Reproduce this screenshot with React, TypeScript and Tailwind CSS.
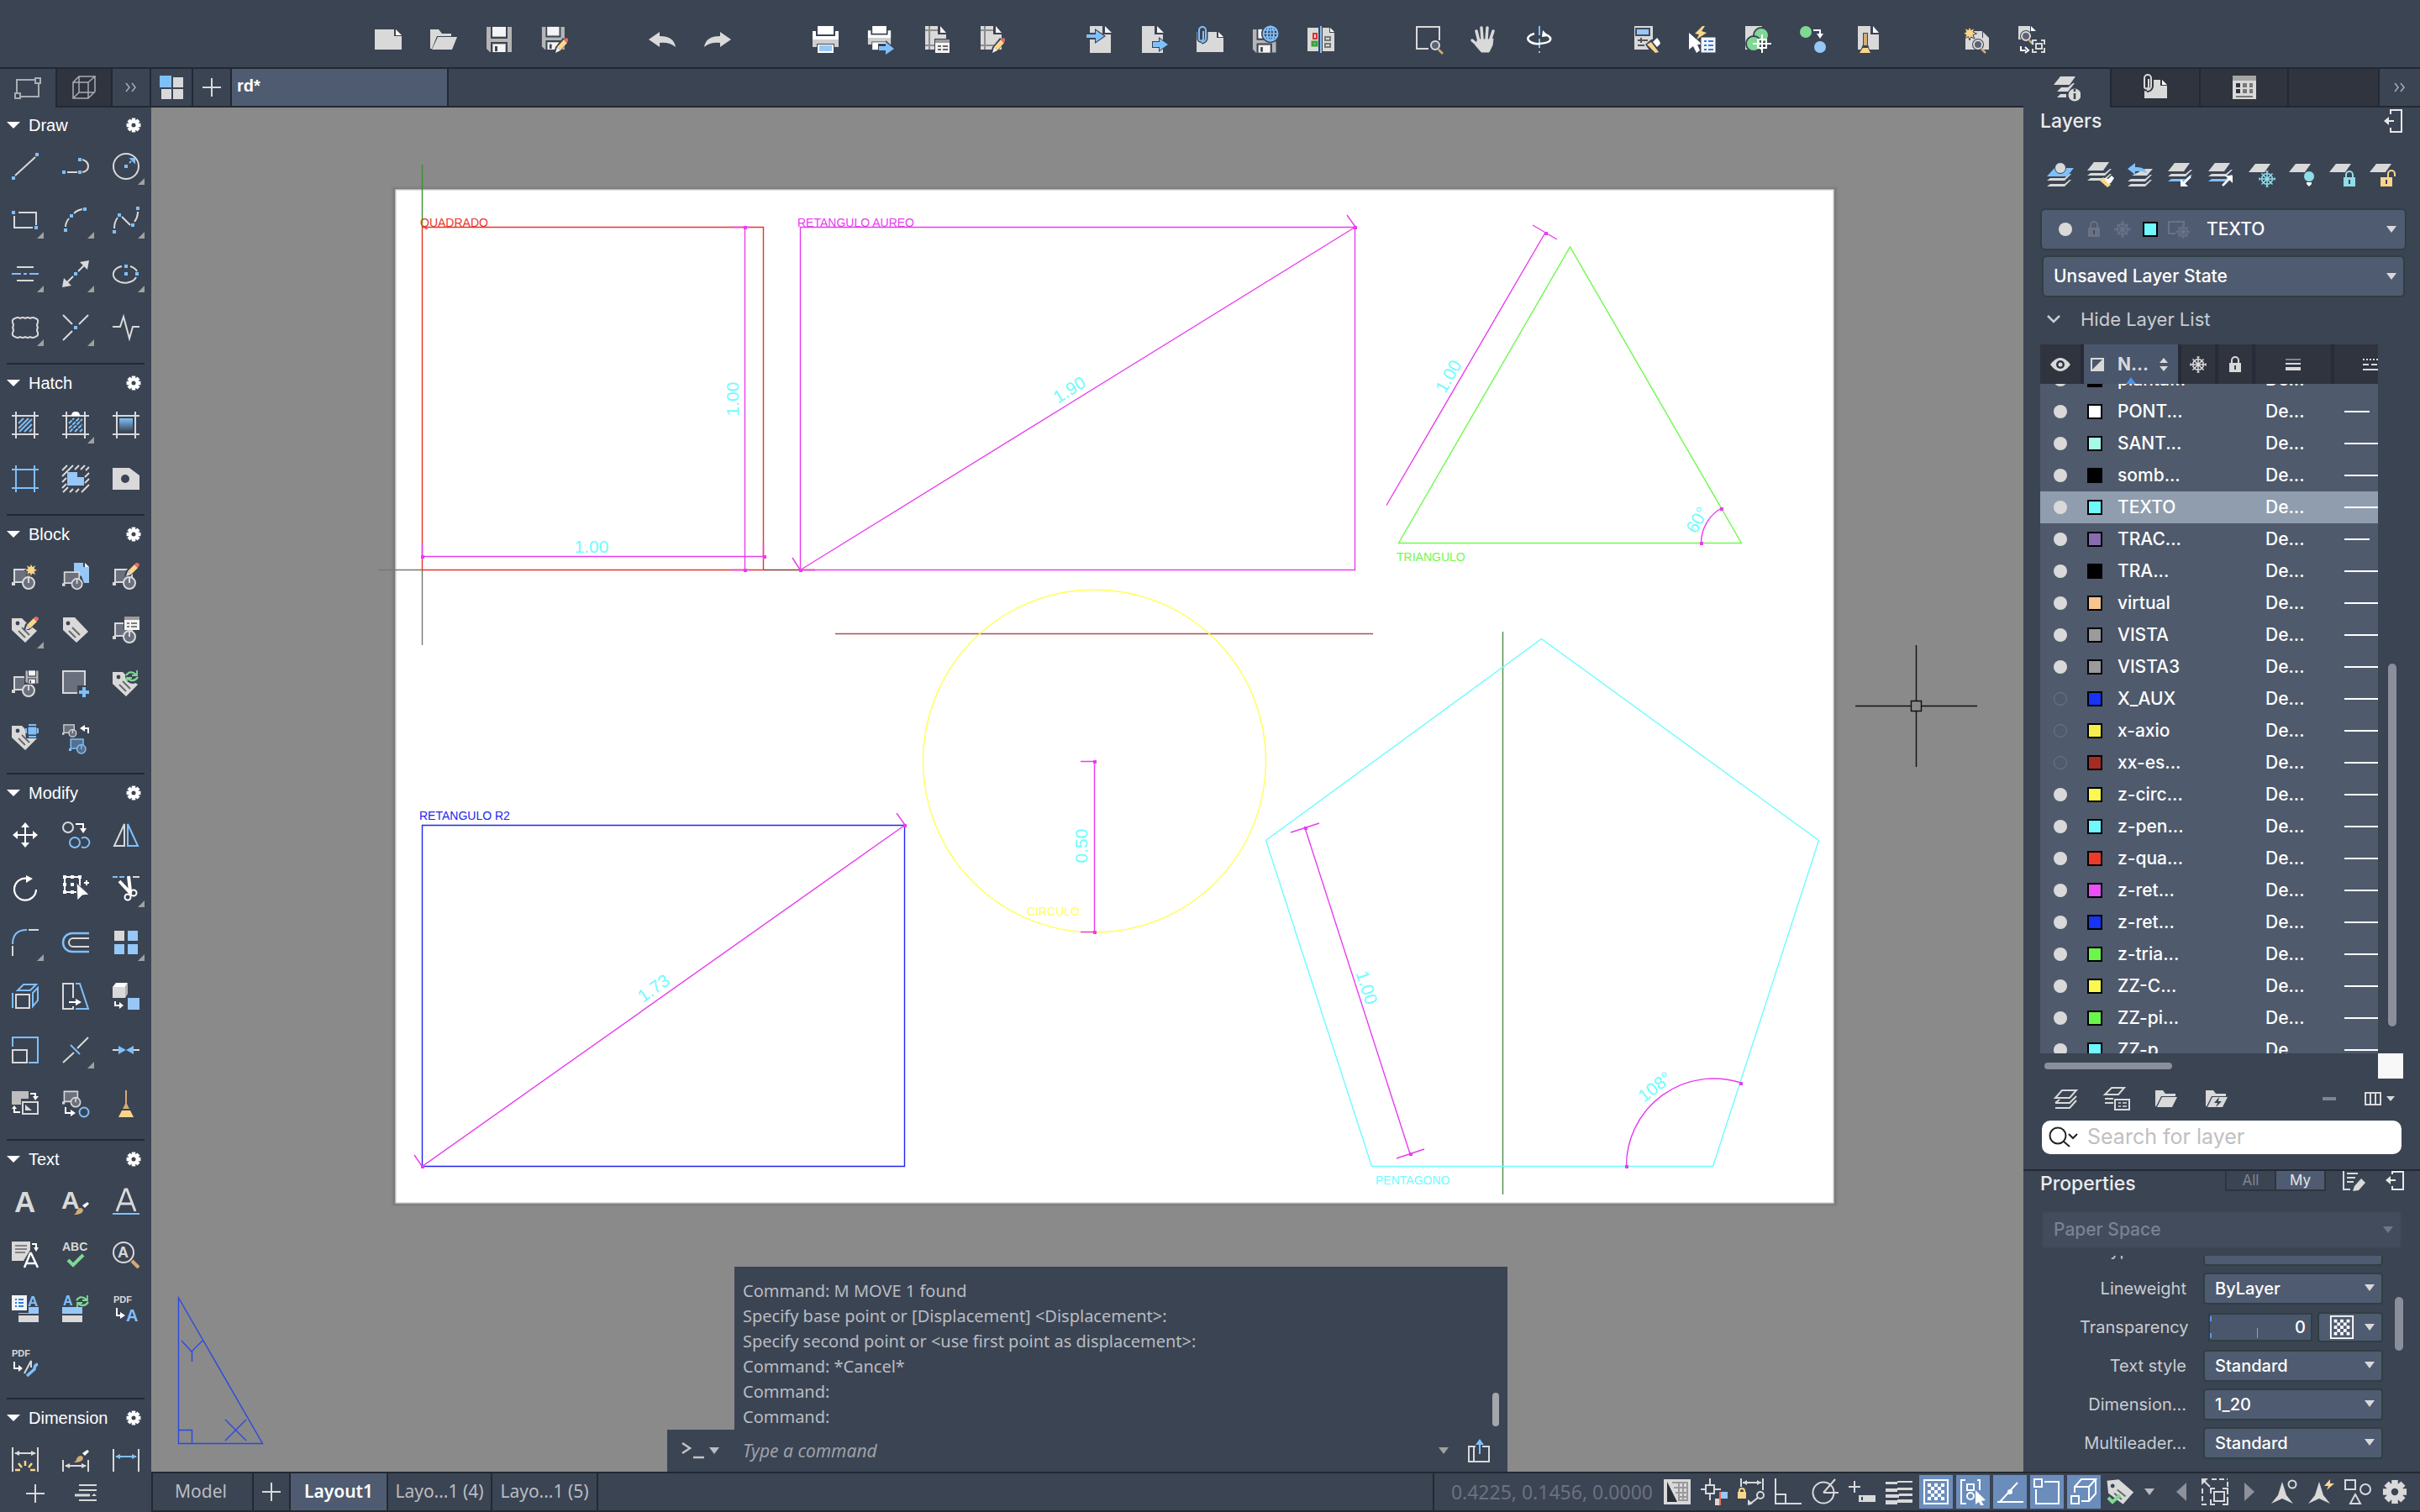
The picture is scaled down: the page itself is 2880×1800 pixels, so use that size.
import { useLayoutEffect, useRef, type ReactNode } from "react";

const G = "#d9d9d9";
const B = "#7fc0fb";
const LB = "#96c7f7";
const Y = "#fbd68a";
const GREEN = "#80d894";
const RED = "#ec6a68";
const TAN = "#d3ab76";
const PANEL = "#3b4453";

// ---------- shared icon pieces, all on a 32 x 32 grid ----------

const dot = (x: number, y: number) => <rect key={`${x}-${y}`} x={x - 2} y={y - 2} width="4" height="4" fill={B} stroke="none" />;

const Page = ({ fill = G }: { fill?: string }) => (
  <g stroke="none">
    <path d="M3 0h15v10h10v22H3z" fill={fill} />
    <path d="M21 0l8 8h-8z" fill="#f4f4f4" />
  </g>
);

const Pencil = () => (
  <g stroke="none">
    <path d="M15 32l2-7 9-11 6 5-9 11z" fill={PANEL} />
    <path d="M19 25l8-9 4 4-8 9z" fill={Y} />
    <path d="M27 16l3-2q3 1 2 4l-2 2z" fill={RED} />
    <path d="M19 25l4 4-6 3z" fill="#f2f2f2" />
  </g>
);

const PencilTop = () => (
  <g stroke="none">
    <path d="M14 16l2-7L26 0l6 2v4L21 16z" fill={PANEL} />
    <path d="M18 10l8-8 4 4-8 8z" fill={Y} />
    <path d="M26 2l2-2q4 0 4 3l-2 3z" fill={RED} />
    <path d="M18 10l4 4-6 2z" fill={G} />
  </g>
);

const Block = ({ c = G, fill = "#6b707e" }: { c?: string; fill?: string }) => (
  <g stroke={c}>
    <path d="M3 8h20v15H3z" fill={fill} />
    <path d="M0 23h4v4H0z" fill={c} stroke="none" />
    <circle cx="20" cy="24" r="7" fill={fill} />
    <path d="M20 24v-7" />
  </g>
);

const Tag = ({ full = false }: { full?: boolean }) => (
  <g stroke="none">
    <path d={full ? "M1 1h14l16 17-14 13L1 16z" : "M0 2h12l4 4 14 11-14 14L0 16z"} fill={G} />
    <circle cx="7" cy="8" r="2.4" fill={PANEL} />
    <path d="M8 17l8 8M12 13l9 9" stroke="#6a6a6a" strokeWidth="2" />
  </g>
);

const Disk = () => (
  <g stroke="none">
    <path d="M1 1h30v30H5l-4-4z" fill="#b5b5b5" />
    <path d="M7 1h17v11H7z" fill="#f4f4f4" />
    <path d="M6 0h2v13h16V0h2v15H6zM6 19h20v12h-2v-10H8v10H6z" fill={PANEL} />
    <path d="M9 22h14v9H9z" fill="#f4f4f4" />
    <path d="M11 24h3v6h-3z" fill={PANEL} />
  </g>
);

const Printer = () => (
  <g stroke="none">
    <path d="M7 0h19v10H7z" fill="#fff" />
    <path d="M1 6h4v6h23V6h4v10H1z" fill="#fff" />
    <path d="M1 16h31v9h-5v-4H6v4H1z" fill="#cfcfcf" />
    <path d="M7 22h19v10H7z" fill="#fff" />
  </g>
);

const Sheet = () => (
  <g stroke="none">
    <path d="M3 0h15v10h10v18H3z" fill={G} />
    <path d="M21 0l7 8h-7z" fill="#f4f4f4" />
    <path d="M3 5h15M3 23h22M8 0v28" stroke="#8d8d8d" />
  </g>
);

const Hatch = ({ c = G }: { c?: string }) => <path d="M0 5h32M0 27h32M5 0v32M27 0v32" stroke={c} strokeWidth="2" />;

const Plane = ({ y, c = G }: { y: number; c?: string }) => <path d={`M8 ${y}h18l-7 10H0z`} fill={c} stroke="none" />;

const Band = ({ y, c = G }: { y: number; c?: string }) => <path d={`M4 ${y}h17l6-5h2l-8 8H0z`} fill={c} stroke="none" />;

const Lens = ({ x, y, r = 5 }: { x: number; y: number; r?: number }) => (
  <g>
    <circle cx={x} cy={y} r={r + 2} fill={PANEL} stroke="none" />
    <circle cx={x} cy={y} r={r} fill="#5b6372" stroke={G} strokeWidth="2" />
    <path d={`M${x + r - 1} ${y + r}l5 5`} stroke={TAN} strokeWidth="2.5" />
  </g>
);

const Flake = ({ x, y, c, r = 8 }: { x: number; y: number; c: string; r?: number }) => (
  <g transform={`translate(${x} ${y}) scale(${r / 8})`} stroke={c} strokeWidth="1.6" fill="none">
    <path d="M-9 0H9M0-9V9M-6.5-6.500L6.500 6.500M-6.500 6.500L6.500-6.500" />
    <path d="M-2.500-6h5L6-2.500v5L2.500 6h-5L-6 2.500v-5z" />
    <path d="M-9-1.500v3M9-1.500v3M-1.500-9h3M-1.500 9h3" />
  </g>
);

const Lock = ({ x, y, c, open }: { x: number; y: number; c: string; open?: boolean }) => (
  <g transform={`translate(${x} ${y})`}>
    <path d={open ? "M9 9V4a4 4 0 0 1 8 0v3" : "M3 9V5a4 4 0 0 1 8 0v4"} stroke={c} strokeWidth="2" fill="none" />
    <path d="M0 8h14v11H0z" fill={c} stroke="none" />
    <path d="M7 11v5" stroke={PANEL} strokeWidth="2" />
  </g>
);

const Cycle = ({ x, y }: { x: number; y: number }) => (
  <g transform={`translate(${x} ${y})`} stroke={GREEN} strokeWidth="2.2" fill="none">
    <path d="M1 6q5-7 12-1M15 8q-5 7-12 2" />
    <path d="M14 0v6h-6M2 14V9h6" strokeWidth="1.8" />
  </g>
);

const Brush = ({ x, y }: { x: number; y: number }) => (
  <g transform={`translate(${x} ${y})`} stroke="none">
    <path d="M10 4l6-4 2 2-5 5z" fill="#fff" />
    <path d="M0 15q3-2 4-6 4-4 7 0 0 6-11 6z" fill={TAN} />
  </g>
);

const letter = (s: string, x: number, y: number, size: number, fill = G) => (
  <text x={x} y={y} fontSize={size} fill={fill} stroke="none" fontWeight="bold" fontFamily="Liberation Sans, sans-serif">
    {s}
  </text>
);

const clip = <path d="M8 6v9a2.5 2.5 0 0 1-5 0V5a4 4 0 0 1 8 0v10a5 5 0 0 1-5 4" fill="none" />;

const star = "M8 0l1.600 4.500L14 2.500l-2 4.500L16.500 9 12 10.500l2 4.500-4.500-2L8 17l-1.500-4.500L2 15l2-4.500L0 9l4-2L2 2.500l4.500 2z";

const icons: Record<string, ReactNode> = {
  // top bar
  new: <g stroke="none"><path d="M0 4h23v8h9v16H0z" fill={G} /><path d="M25 4l7 7h-7z" fill="#fff" /></g>,
  open: <g stroke="none"><path d="M0 4h10l4 5h11v3H8L2 27H0z" fill={G} /><path d="M9 13h23l-6 15H2z" fill={G} /></g>,
  save: <Disk />,
  saveAs: <g><g transform="scale(.9)"><Disk /></g><Pencil /></g>,
  undo: <path d="M0 16L13 7v5q17 0 19 13-7-6-19-5v5z" fill={G} stroke="none" />,
  redo: <path d="M32 16L19 7v5Q2 12 0 25q7-6 19-5v5z" fill={G} stroke="none" />,
  print: <g stroke="none"><Printer /><path d="M9 23h15v7H9z" fill={LB} /></g>,
  publish: <g stroke="none"><g transform="scale(.88)"><Printer /></g><path d="M13 21h9v-4l10 9-10 8v-5h-9z" fill={PANEL} /><path d="M14 24h8v-5l10 8-10 7v-5h-8z" fill={B} /></g>,
  pageSetup: <g stroke="none"><Sheet /><path d="M14 15h18v17H14z" fill={PANEL} /><path d="M15 20h17v12H15z" fill="#f4f4f4" /><path d="M15 16h17v4H15z" fill="#9b9b9b" /><path d="M18 24h4M24 24h6M18 28h4M24 28h6" stroke="#666" /></g>,
  plotStyle: <g><Sheet /><Pencil /></g>,
  import: <g transform="translate(2 0)"><Page /><path d="M0 8h9V3l13 9-13 9v-5H0z" fill={PANEL} stroke="none" /><path d="M-1 10h11V5l10 7-10 7v-5H-1z" fill={B} stroke="none" /></g>,
  export: <g><g transform="translate(-2 0)"><Page /></g><path d="M13 18h8v-5l12 9-12 9v-5h-8z" fill={PANEL} stroke="none" /><path d="M14 19h8v-4l10 7-10 7v-4h-8z" fill={B} stroke="none" /></g>,
  attach: <g stroke="none"><path d="M0 7h24v7h8v17H0z" fill={G} /><path d="M26 7l6 6h-6z" fill="#fff" /><g stroke={PANEL} strokeWidth="5">{clip}</g><g stroke={B} strokeWidth="2">{clip}</g></g>,
  reference: <g stroke="none"><path d="M3 7h19v7h8v15H3z" fill={G} /><path d="M24 7l6 6h-6z" fill="#fff" /><g stroke="#2f343f" strokeWidth="6">{clip}</g><g stroke={G} strokeWidth="2">{clip}</g></g>,
  saveWeb: <g stroke="none"><g transform="translate(0 3) scale(.92)"><Disk /></g><circle cx="22" cy="9" r="11" fill={PANEL} /><g stroke={B}><circle cx="22" cy="9" r="8.500" /><ellipse cx="22" cy="9" rx="4" ry="8.500" /><path d="M13 9h18M15 5h14M15 13h14M22 0v18" strokeWidth="1.500" /></g></g>,
  compare: <g stroke="none"><path d="M0 2h13v28H0zM18 2h8v6h6v22H18z" fill={G} /><path d="M27 2l5 5h-5z" fill="#fff" /><path d="M15 0h2v32h-2z" fill={B} /><path d="M7 9h4v6H7z" stroke="#e0302c" /><path d="M6 19h5v4H6z" stroke="#3aa33a" strokeWidth="3" /><path d="M21 13h6v4h-6zM21 21h6v4h-6z" stroke="#777" /></g>,
  zoomWin: <g><path d="M16 27H2V1h27v16" /><Lens x={24} y={23} r={5} /></g>,
  pan: <g stroke={G} strokeWidth="3.500" strokeLinecap="round"><path d="M10 18L7 6M14 16L13 2M19 16L20 2M23 18l4-12M10 24L2 17" /><path d="M9 16h15l3-1-1 8-4 8H13L6 23z" fill={G} strokeWidth="1" /></g>,
  orbit: <g><path d="M16 0v32" stroke={B} strokeDasharray="11 4" /><path d="M10 9Q0 12 3 17q5 5 13 4 15-1 13-7-2-3-6-4" stroke="#fff" strokeWidth="2.500" /><path d="M20 5l-1 8 8-1z" fill="#fff" stroke="none" /></g>,
  matchProp: <g stroke="none"><path d="M1 0h22v28H1z" fill={G} /><path d="M3 3h16v8H3z" fill={LB} stroke="#444c5a" /><path d="M5 17h12M5 23h8M9 14v6" stroke="#555" /><path d="M14 22l7-6 7-1 4 6-6 11-4 1z" fill={PANEL} /><path d="M16 22l5-3 9 12-4 1z" fill={Y} /><path d="M23 19l5-5 3 4 1 3-4 4z" fill="#fff" /></g>,
  quickSel: <g stroke="none"><path d="M0 8v20l5-4 4 8 4-3-3-7h6z" fill="#fff" /><path d="M16 0L7 9l5 1-3 6L21 8l-6-2 4-6z" fill={Y} /><path d="M14 13h18v19H14z" fill="#f4f4f4" stroke={PANEL} strokeWidth="1" /><path d="M18 18h3M23 18h6M18 23h3M23 23h6M18 28h3M23 28h6" stroke="#2f7de0" /></g>,
  group: <g stroke="none"><path d="M1 0h20v28H1z" fill={G} /><circle cx="20" cy="11" r="9" fill={GREEN} stroke={PANEL} /><circle cx="11" cy="21" r="9" fill={GREEN} stroke={PANEL} /><path d="M21 10v22M10 21h22M16 16h10v10H16z" stroke="#fff" strokeWidth="2" /></g>,
  replace: <g stroke="none"><circle cx="7" cy="7" r="7" fill={GREEN} /><circle cx="24" cy="25" r="7" fill={LB} /><path d="M16 5h8v6" stroke="#fff" /><path d="M20 9h8l-4 6z" fill="#fff" /></g>,
  purge: <g stroke="none"><path d="M3 0h15v10h10v18H3z" fill={G} /><path d="M21 0l7 8h-7z" fill="#fff" /><path d="M9 8h6v14l3 10H5l4-10z" fill={PANEL} /><path d="M10 9h4v14h-4z" fill={TAN} /><path d="M9 26h6l3 6H5z" fill={Y} /></g>,
  capture: <g stroke="none"><path d="M3 6h20v22H3z" fill={G} /><path d="M24 7l7 7h-7zM23 14h8v14h-8z" fill={G} /><g stroke={PANEL} strokeWidth="1"><path d={star} fill={Y} /></g><Lens x={18} y={22} /></g>,
  extract: <g stroke="none"><path d="M0 0h14v16H0z" fill={G} /><path d="M15 0l6 6h-6z" fill="#fff" /><Lens x={9} y={12} r={5} /><path d="M3 24v5h6M8 25l4 4-4 3" stroke="#fff" /><path d="M17 22v-5h5M27 17h4v5M31 26v5h-4M22 31h-5v-4" stroke={G} /><path d="M21 21h7v6h-7z" stroke={G} /></g>,
  // draw
  line: <g><path d="M4 27L28 5" />{dot(2, 30)}{dot(30, 2)}</g>,
  polyline: <g><path d="M6 23h12M24 8q7 2 7 8t-7 7" />{dot(2, 23)}{dot(21, 23)}{dot(21, 8)}</g>,
  circle: <g><circle cx="16" cy="16" r="15" /><path d="M20 12l5-5" stroke={B} strokeDasharray="3 1" /><path d="M22 7h4v4z" fill={B} stroke={B} />{dot(16, 16)}</g>,
  rect: <g><path d="M8 7h21v15M25 25H3V11" />{dot(2, 7)}{dot(29, 25)}</g>,
  arc: <g><path d="M4 24q0-5 4-10M14 8q4-4 10-5" />{dot(4, 28)}{dot(11, 11)}{dot(27, 3)}</g>,
  spline: <g><path d="M2 26q0-8 4-13M11 12l10 10M26 18q4-5 4-12" />{dot(2, 30)}{dot(8, 10)}{dot(24, 22)}{dot(30, 2)}</g>,
  mline: <g><path d="M6 8h20M6 24h20" /><path d="M0 16h11M14 16h4M21 16h11" stroke={B} /></g>,
  ray: <g><path d="M4 28l9-9M19 13l9-9" /><path d="M0 32l2-11 9 9zM32 0l-2 11-9-9z" fill={G} stroke="none" />{dot(16, 16)}</g>,
  ellipse: <g><path d="M11 7A14 10 0 1 0 28 20M21 7q6 2 8 6" />{dot(16, 7)}{dot(16, 16)}{dot(29, 16)}</g>,
  cloud: <path d="M4 5q3-2 6 0 3-2 6 0 3-2 6 0 3-2 6 0 4 1 3 5-2 3 0 6-2 3 0 6 1 4-3 5-3 2-6 0-3 2-6 0-3 2-6 0-3 2-6 0-4-1-3-5 2-3 0-6 2-3 0-6-1-4 3-5z" />,
  xline: <g><path d="M1 1l11 11M31 1L20 12M1 31l11-11" />{dot(16, 16)}</g>,
  breakline: <path d="M0 15h9l4-12 7 26 4-14h8" />,
  // hatch
  hatch: <g><Hatch /><path d="M8 14l6-6M8 20L20 8M9 24L24 9M15 24l9-9M21 24l3-3" stroke={B} /></g>,
  hatchEdit: <g><Hatch /><path d="M8 14l6-6M8 20L20 8M9 24L24 9M15 24l9-9M21 24l3-3" stroke={B} strokeDasharray="5 1" /><path d="M11 5q0-5 5-5t5 5z" fill="#fff" stroke="none" /></g>,
  gradient: <g><defs><linearGradient id="grad" x1="0" y1="0" x2="0" y2="1"><stop offset="0" stopColor={B} /><stop offset="1" stopColor={PANEL} /></linearGradient></defs><Hatch /><path d="M8 8h16v16H8z" fill="url(#grad)" stroke="none" /></g>,
  boundary: <Hatch c={B} />,
  region: <g><path d="M0 6l6-6M0 13L13 0M0 20l5-5M0 27l5-5M1 32l6-6M15 5l5-5M22 5l5-5M28 6l4-4M27 14l5-5M27 21l5-5M27 28l5-5M9 32l4-4M16 32l4-4M23 32l4-4" /><path d="M6 8h12v6h8v10H6z" fill={LB} stroke="none" /></g>,
  wipeout: <g stroke="none"><path d="M0 3h20l12 9v17H0z" fill={G} /><circle cx="15" cy="16" r="5" fill={PANEL} /></g>,
  // block
  blockNew: <g><Block /><g transform="translate(15 0)"><path d={star} fill={Y} stroke={PANEL} strokeWidth="1" /></g></g>,
  blockInsert: <g><path d="M14 0h11v5h7v19h-6l-3-8-9-4z" fill={LB} stroke="none" /><path d="M27 0l5 5h-5z" fill="#fff" stroke="none" /><g transform="translate(0 4) scale(.88)"><Block /></g></g>,
  blockEdit: <g><Block /><PencilTop /></g>,
  attrEdit: <g><Tag /><PencilTop /></g>,
  attrDef: <Tag full />,
  blockProp: <g><Block /><path d="M13 0h19v16H13z" fill={PANEL} stroke="none" /><path d="M14 0h18v4H14z" fill="#9b9b9b" stroke="none" /><path d="M14 4h18v12H14z" fill="#f4f4f4" stroke="none" /><path d="M17 8h3M22 8h7M17 12h3M22 12h7" stroke="#555" strokeWidth="1.600" /></g>,
  blockSave: <g><Block /><path d="M15 0h17v17H15z" fill={PANEL} stroke="none" /><g transform="translate(16 0) scale(.5)"><Disk /></g></g>,
  blockBase: <g><path d="M1 1h26v26H1z" fill="#6b707e" /><path d="M18 18h14v14H18z" fill={PANEL} stroke="none" /><path d="M26 20v12M20 26h12" stroke={B} strokeWidth="4" /></g>,
  attrSync: <g><Tag /><circle cx="24" cy="7" r="9" fill={PANEL} stroke="none" /><Cycle x={15} y={0} /></g>,
  attrExt: <g><Tag /><path d="M15 0h17v17H17z" fill={PANEL} stroke="none" /><path d="M20 4h9v8h-9z" fill={B} stroke={B} strokeWidth="1" /><path d="M20 1h9M20 15h9M17 5v6M31 5v6" stroke={B} /></g>,
  blockRep: <g><g transform="translate(0 -4) scale(.62)"><Block /></g><g transform="translate(8 12) scale(.74)"><Block c={B} fill="#55708f" /></g><path d="M31 11V5h-6" stroke="#fff" /><path d="M27 1v8l-6-4z" fill="#fff" stroke="none" /></g>,
  // modify
  move: <g stroke="#fff"><path d="M16 4v24M4 16h24" /><path d="M16 1l5 6H11zM16 31l5-6H11zM1 16l6-5v10zM31 16l-6-5v10z" fill="#fff" stroke="none" /></g>,
  copy: <g><circle cx="7" cy="7" r="6" /><circle cx="15" cy="25" r="6" stroke={B} /><path d="M23 20a6 6 0 1 1 0 10" stroke={B} /><path d="M16 3h9v6" stroke="#fff" /><path d="M21 8h8l-4 6z" fill="#fff" stroke="none" /></g>,
  mirror: <g><path d="M14 3v26H2z" /><path d="M18 3v26h12z" stroke={B} /></g>,
  rotate: <g stroke="#fff"><path d="M19 4A13 13 0 1 0 29 17" strokeWidth="2.200" /><path d="M17 0l8 4-8 5z" fill="#fff" stroke="none" /></g>,
  select: <g stroke="#fff"><path d="M3 2h18v18H3z" /><path d="M1 0h4v4H1zM10 0h4v4h-4zM19 0h4v4h-4zM1 9h4v4H1zM10 9h4v4h-4zM1 18h4v4H1zM10 18h4v4h-4z" fill="#fff" stroke="none" /><path d="M17 9l15 14-8 1-6 6z" fill="#fff" stroke={PANEL} strokeWidth="1" /><path d="M29 6v6M26 9h6" /></g>,
  trim: <g><path d="M0 2h16" stroke={B} strokeDasharray="6 2" /><path d="M24 2h8" /><path d="M8 7l14 15M19 1l2 18" stroke="#fff" strokeWidth="4" /><circle cx="18" cy="26" r="3.500" stroke="#fff" /><circle cx="25" cy="21" r="3.500" stroke="#fff" /></g>,
  fillet: <g><path d="M1 18Q1 1 18 1" stroke={B} /><path d="M20 1h12M1 20v12" /></g>,
  offset: <g><path d="M32 5H12a11 11 0 0 0 0 22h20" stroke={B} strokeWidth="2.500" /><path d="M32 11H13a5 5 0 0 0 0 10h19" /></g>,
  array: <g stroke="none"><path d="M2 2h12v12H2z" fill={G} /><path d="M18 2h12v12H18zM2 18h12v12H2zM18 18h12v12H18z" fill={LB} /></g>,
  solid: <g><path d="M5 14h16v16H5z" /><path d="M1 12v18M7 9l7-7h15l-7 7zM25 12l6-6v15l-6 7z" stroke={B} /></g>,
  stretch: <g><path d="M13 18V1H1v30h12v-3" /><path d="M16 1h5l10 30H16" stroke={B} /><path d="M8 23h9" stroke="#fff" /><path d="M16 19v8l7-4z" fill="#fff" stroke="none" /></g>,
  flat: <g stroke="none"><path d="M0 5h15v13H0z" fill={G} /><path d="M0 5l4-5h14l-3 5z" fill="#fff" /><path d="M15 5l3-5v13l-3 5z" fill="#b5b5b5" /><path d="M18 18h14v14H18z" fill={LB} /><path d="M3 22v5h6" stroke="#fff" /><path d="M8 23v8l5-4z" fill="#fff" /></g>,
  scale: <g><path d="M1 12V1h30v30H20" stroke={B} /><path d="M1 16h17v15H1z" /></g>,
  break: <g><path d="M1 31l13-12M18 14L31 1" /><path d="M10 10l11 11" stroke={B} /></g>,
  join: <g><path d="M0 16h8M24 16h8" /><path d="M7 11v10l9-5zM25 11v10l-9-5z" fill={B} stroke="none" /></g>,
  order: <g><path d="M0 1h20v9h-9v7H0z" fill="#bdbdbd" stroke="none" /><path d="M13 14h18v14H13z" /><path d="M16 17v7h8z" fill={G} stroke="none" /><path d="M22 4h6v4M10 26H3v-5" stroke="#fff" /><path d="M25 7h7l-4 5zM0 22h6l-3-4z" fill="#fff" stroke="none" /></g>,
  explode: <g><g transform="translate(0 -5) scale(.8)"><Block /></g><path d="M4 20v7h7" stroke="#fff" /><path d="M10 23v8l6-4z" fill="#fff" stroke="none" /><circle cx="26" cy="26" r="5.500" stroke={B} /></g>,
  broom: <g stroke="none"><path d="M15 0h2v16l3 6h-8l3-6z" fill={TAN} /><path d="M11 24h10l4 8H7z" fill={Y} /></g>,
  // text
  textA: letter("A", 3, 29, 35),
  textStyle: <g>{letter("A", -1, 25, 30)}<Brush x={14} y={17} /></g>,
  textLine: <g><path d="M5 28L15 2h2l10 26M9 19h14" strokeWidth="3" /><path d="M0 31h32" stroke={B} /></g>,
  textConv: <g><path d="M0 0h22v10l-8 13H0z" fill={G} stroke="none" /><path d="M4 5h14M4 9h14M4 13h12" stroke="#666" strokeWidth="1.500" /><path d="M24 3h5v5" stroke="#fff" /><path d="M26 7h6l-3 5z" fill="#fff" stroke="none" /><path d="M15 31l7-17h1l8 17M18 26h11" stroke="#fff" strokeWidth="2.500" /></g>,
  spell: <g>{letter("ABC", 0, 11, 14)}<path d="M7 22l6 6 12-12" stroke={GREEN} strokeWidth="4" /></g>,
  findText: <g><circle cx="13" cy="13" r="12" />{letter("A", 6, 19, 18)}<path d="M23 23l8 8" stroke={TAN} strokeWidth="4" /></g>,
  field: <g stroke="none"><path d="M0 0h18v18H0z" fill="#f4f4f4" /><path d="M4 5h2M8 5h6M4 9h2M8 9h6M4 13h2M8 13h6" stroke="#2f7de0" />{letter("A", 19, 13, 17, B)}<path d="M20 14h12v8H8v-1h12z" fill={LB} /><path d="M8 24h24v8H8z" fill={G} /></g>,
  fieldUp: <g stroke="none">{letter("A", 1, 12, 16, B)}<path d="M0 14h24v8H0z" fill={LB} /><path d="M0 24h24v8H0z" fill={G} /><Cycle x={16} y={0} /></g>,
  pdfText: <g>{letter("PDF", 1, 9, 11)}<path d="M5 15v9h6" stroke="#fff" /><path d="M9 20v8l6-4z" fill="#fff" stroke="none" />{letter("A", 16, 31, 20, B)}</g>,
  pdfSet: <g>{letter("PDF", 0, 9, 11)}<path d="M3 15v8h6" stroke="#fff" /><path d="M8 19v8l5-4z" fill="#fff" stroke="none" /><path d="M15 29l8-15v8" /><path d="M18 32l9-8q0-5 4-6" stroke={B} strokeWidth="3.500" /></g>,
  dim: <g><path d="M1 1v31M31 1v31M4 8h24" /><path d="M3 8l6-3v6zM29 8l-6-3v6z" fill={G} stroke="none" /><path d="M16 17v6M8 20l4 5M24 20l-4 5M4 28h6M28 28h-6" stroke={Y} strokeWidth="2.500" /></g>,
  dimStyle: <g><path d="M1 16v15M31 16v15M4 23h24" /><path d="M3 23l6-3v6zM29 23l-6-3v6z" fill={G} stroke="none" /><Brush x={14} y={4} /></g>,
  dimLin: <g><path d="M1 3v29M31 3v29" /><path d="M4 12h24" stroke={B} /><path d="M3 12l6-3v6zM29 12l-6-3v6z" fill={B} stroke="none" /></g>,
  // layers
  layMake: <g><Band y={27} /><Band y={20} /><path d="M0 18l9-10h23l-8 10z" fill={B} stroke="none" /><circle cx="16" cy="8" r="6.500" fill={G} stroke={PANEL} strokeWidth="1" /></g>,
  layMatch: <g><Plane y={1} /><Band y={14} /><Band y={20} /><path d="M15 23l4-4 9 9-4 3z" fill={Y} stroke="none" /><path d="M20 20l5 1 4-4 3 3-4 6-3 1z" fill="#fff" stroke="none" /></g>,
  layPrev: <g><Band y={27} /><Band y={21} /><path d="M5 17h18l7-8h-9" fill={G} stroke="none" /><path d="M0 9l9-7v5q11-1 14 7-7-3-14-2v4z" fill={B} stroke="none" /></g>,
  layIso: <g><Plane y={2} /><Band y={15} /><Band y={21} c={B} /><path d="M27 18L17 28" stroke="#fff" strokeWidth="2.500" /><path d="M15 30v-9l9 9z" fill="#fff" stroke="none" /></g>,
  layUniso: <g><Plane y={2} /><Band y={15} /><Band y={21} c={B} /><path d="M17 29l10-10" stroke="#fff" strokeWidth="2.500" /><path d="M29 17v9l-9-9z" fill="#fff" stroke="none" /></g>,
  layFreeze: <g><Plane y={3} /><Flake x={22} y={21} c="#8fdde6" /></g>,
  layOff: <g><Plane y={3} /><circle cx="24" cy="18" r="6.500" fill="#8fdde6" stroke={PANEL} strokeWidth="1" /><path d="M21 25h6v2l-3 3-3-3z" fill="#fff" stroke="none" /></g>,
  layLock: <g><Plane y={3} /><Lock x={17} y={11} c="#8fdde6" /></g>,
  layUnlock: <g><Plane y={3} /><Lock x={13} y={11} c={Y} open /></g>,
  addLayer: <path d="M12 6h17l-8 9H4zM29 13l-8 8H4M29 18l-8 9H4M4 21l5-4" />,
  layState: <g><path d="M11 3h15l-7 8H3zM3 16h10M3 21h10" /><path d="M15 17h17v12H15z" fill={PANEL} /><path d="M19 21h3M24 21h5M19 25h3M24 25h5" strokeWidth="1.500" /></g>,
  group1: <g stroke="none"><path d="M3 6h9l3 4h12v3H10L4 25H3z" fill={G} /><path d="M11 14h18l-6 12H5z" fill={G} /></g>,
  group2: <g stroke="none"><path d="M3 6h9l3 4h12v3H10L4 25H3z" fill={G} /><path d="M11 14h18l-6 12H5z" fill={G} /><path d="M19 14l-6 7h4l-2 5 7-7h-4z" fill={PANEL} /></g>,
  // status bar
  modelPaper: <g stroke="none"><path d="M0 1h32v30H0z" fill={G} /><path d="M4 4l12 24H4z" fill="#2b2f38" /><path d="M10 5h18v21H17" fill="none" stroke="#9a9a9a" /><path d="M12 11h16M14 17h14M17 22h11M18 5v20M23 5v21" stroke="#9a9a9a" /></g>,
  snapCross: <g><path d="M11 0v8M11 17v9M0 13h7M15 13h9" /><path d="M6 8h10v10H6z" /><path d="M24 16h8v8h-8z" fill={LB} stroke="none" /><path d="M17 24h5v8h-5z" fill={G} stroke="none" /><path d="M23 16v16" stroke="#f06a5d" /></g>,
  infer: <g><path d="M4 0v10M30 0v14M6 5h22" /><path d="M6 5l5-3v6zM28 5l-5-3v6z" fill={G} stroke="none" /><path d="M2 17v-2a3 3 0 0 1 6 0v2" stroke={Y} /><path d="M0 16h10v8H0z" fill={Y} stroke="none" /><circle cx="27" cy="20" r="4" /><path d="M24 23l-10 8" /><path d="M12 32v-7l6 5z" fill={G} stroke="none" /></g>,
  ortho: <path d="M1 0v30h31M1 19h12v11" />,
  polar: <g><circle cx="14" cy="17" r="12.500" /><path d="M14 17L28 1M14 17h18" /></g>,
  dynInput: <g><path d="M7 3v14M0 10h14" /><path d="M12 20h20v8H12z" fill={G} stroke="none" /><path d="M16 22v4" stroke={PANEL} /></g>,
  lineweight: <g stroke="none" fill={G}><path d="M0 4h14V3h18v2H14v2H0zM0 12h14v-1h18v3H14v2H0zM0 19h16v-1h16v3H16v2H0zM0 26h14v-1h18v4H14v2H0z" /></g>,
  transp: (
    <g stroke="#fff">
      <path d="M2 2h28v28H2z" />
      <path d="M6 8h20M6 16h20M6 24h20" strokeWidth="4" strokeDasharray="4 4" />
      <path d="M10 12h12M10 20h12" strokeWidth="4" strokeDasharray="4 4" />
    </g>
  ),
  cycleSel: <g stroke="#fff"><path d="M7 2H2v28h6M21 2h3v12M9 7h8v7H9z" /><circle cx="13" cy="21" r="4" /><path d="M19 14l12 12-5 1 3 5h-4l-2-4-4 3z" fill="#fff" stroke="none" /></g>,
  osnap: <g stroke="#fff"><path d="M4 28L25 5M1 28h31" /><circle cx="16" cy="16" r="2" fill="#fff" /></g>,
  snap2d: <g stroke="#fff"><path d="M13 4h17v26H3V13" /><path d="M1 1h9v9H1z" /></g>,
  snap3d: <g stroke="#fff"><path d="M5 17V10h17v17H13M5 10l8-9h17l-8 9M30 1v17l-8 9" /><path d="M1 21h9v9H1z" /></g>,
  annoTag: <g><g transform="rotate(-6 16 16)"><Tag full /></g><path d="M1 23l5 5 9-8" stroke={GREEN} strokeWidth="4" /></g>,
  prev: <path d="M21 5v22L9 16z" fill="#8c919c" stroke="none" />,
  next: <path d="M11 5v22l12-11z" fill="#8c919c" stroke="none" />,
  viewport: <g><path d="M12 1h19M31 4v27M1 12v19h8M11 31h4" strokeDasharray="6 3" /><path d="M3 3l7 7" /><path d="M0 0h8L0 8z" fill={G} stroke="none" /><path d="M11 18v-6h5M25 12h6v6M31 25v6h-6M16 31h-5v-6" /><path d="M15 16h12v11H15z" /></g>,
  annoVis: <g><path d="M14 4l5 16 8 10-13-6-13 6 8-10z" fill={G} stroke="none" /><circle cx="26" cy="7" r="4.500" /></g>,
  annoAuto: <g><path d="M14 4l5 16 8 10-13-6-13 6 8-10z" fill={G} stroke="none" /><path d="M27 1l-7 8h5l-2 5 9-8h-5z" fill={Y} stroke="none" /></g>,
  isolate: <g><path d="M1 2h12v11H1z" /><circle cx="25" cy="13" r="6" /><path d="M13 19l6 11H7z" /></g>,
};

function Icon({ name, className = "size-8" }: { name: string; className?: string }) {
  return (
    <svg viewBox="0 0 32 32" fill="none" stroke={G} strokeWidth="2" className={`shrink-0 overflow-visible ${className}`} aria-hidden="true">
      {icons[name]}
    </svg>
  );
}

function Gear({ className }: { className: string }) {
  return (
    <svg viewBox="-16 -16 32 32" className={`shrink-0 ${className}`} aria-hidden="true">
      {[0, 45, 90, 135].map((a) => (
        <rect key={a} x="-4" y="-15" width="8" height="30" fill="currentColor" transform={`rotate(${a})`} />
      ))}
      <circle r="11" fill="currentColor" />
      <circle r="4.5" fill={PANEL} />
    </svg>
  );
}

function Caret({ className = "", size = "h-2 w-3" }: { className?: string; size?: string }) {
  return (
    <svg viewBox="0 0 12 8" preserveAspectRatio="none" className={`pointer-events-none shrink-0 ${size} ${className}`} aria-hidden="true">
      <path d="M0 0h12L6 8z" fill="currentColor" />
    </svg>
  );
}

function Plus({ className = "size-[22px]" }: { className?: string }) {
  return (
    <svg viewBox="0 0 22 22" className={className} stroke={G} strokeWidth="2" aria-hidden="true">
      <path d="M11 0v22M0 11h22" />
    </svg>
  );
}

function Chevrons() {
  return (
    <svg viewBox="0 0 14 12" className="h-3 w-3.5" fill="none" stroke="#a9adb5" strokeWidth="1.5" aria-hidden="true">
      <path d="M1 1l4 5-4 5M8 1l4 5-4 5" />
    </svg>
  );
}

const toolbar = [
  ["new", "open", "save", "saveAs"],
  ["undo", "redo"],
  ["print", "publish", "pageSetup", "plotStyle"],
  ["import", "export", "attach", "saveWeb", "compare"],
  ["zoomWin", "pan", "orbit"],
  ["matchProp", "quickSel", "group", "replace", "purge"],
  ["capture", "extract"],
];

// a trailing "+" marks tools that carry a flyout
const toolSets = [
  { title: "Draw", tools: ["line", "polyline", "circle+", "rect+", "arc+", "spline+", "mline+", "ray+", "ellipse+", "cloud+", "xline+", "breakline"] },
  { title: "Hatch", tools: ["hatch", "hatchEdit+", "gradient", "boundary", "region", "wipeout"] },
  { title: "Block", tools: ["blockNew", "blockInsert", "blockEdit", "attrEdit+", "attrDef", "blockProp", "blockSave", "blockBase", "attrSync", "attrExt", "blockRep"] },
  {
    title: "Modify",
    tools: ["move", "copy", "mirror", "rotate", "select", "trim+", "fillet+", "offset", "array+", "solid", "stretch", "flat", "scale", "break+", "join", "order", "explode", "broom"],
  },
  { title: "Text", tools: ["textA", "textStyle", "textLine", "textConv", "spell", "findText", "field", "fieldUp", "pdfText", "pdfSet"] },
  { title: "Dimension", tools: ["dim", "dimStyle", "dimLin"] },
];

const layers: { name: string; color: string; off?: boolean; short?: boolean }[] = [
  { name: "planta...", color: "#000000" },
  { name: "PONT...", color: "#ffffff", short: true },
  { name: "SANT...", color: "#a5fbe6" },
  { name: "somb...", color: "#000000" },
  { name: "TEXTO", color: "#6ff9ff" },
  { name: "TRAC...", color: "#8a6bb1", short: true },
  { name: "TRA...", color: "#000000" },
  { name: "virtual", color: "#f6c58d" },
  { name: "VISTA", color: "#9b9b9b" },
  { name: "VISTA3", color: "#9b9b9b" },
  { name: "X_AUX", color: "#1733f5", off: true },
  { name: "x-axio", color: "#f7ee4b", off: true },
  { name: "xx-es...", color: "#a42c22", off: true },
  { name: "z-circ...", color: "#fbf94f" },
  { name: "z-pen...", color: "#6ff9ff" },
  { name: "z-qua...", color: "#ea3a2b" },
  { name: "z-ret...", color: "#e94ff5" },
  { name: "z-ret...", color: "#1733f5" },
  { name: "z-tria...", color: "#6cf64c" },
  { name: "ZZ-C...", color: "#fbf94f" },
  { name: "ZZ-pi...", color: "#6cf64c" },
  { name: "ZZ-p...", color: "#6ff9ff" },
];

function useScrolled<T extends HTMLElement>(top: number) {
  const ref = useRef<T>(null);
  useLayoutEffect(() => {
    if (ref.current) ref.current.scrollTop = top;
  }, [top]);
  return ref;
}

function TopBar() {
  return (
    <header className="flex h-[82px] shrink-0 items-center justify-center gap-[62px] border-b-2 border-[#222933] pt-3.5">
      {toolbar.map((group) => (
        <div key={group[0]} className="flex">
          {group.map((name) => (
            <button key={name} aria-label={name} className="flex h-12 w-[66px] items-center justify-center">
              <Icon name={name} />
            </button>
          ))}
        </div>
      ))}
    </header>
  );
}

function ToolPalette() {
  return (
    <aside className="flex w-[180px] shrink-0 flex-col">
      <div className="flex h-[46px] shrink-0">
        <button aria-label="2D tools" className="flex w-[66px] items-center justify-center">
          <svg viewBox="0 0 32 26" className="h-[26px] w-8" fill="none" stroke="#a9adb5" strokeWidth="2">
            <path d="M25 3H3v16M7 23h22V7M25 1h6v6h-6zM1 19h6v6H1z" />
          </svg>
        </button>
        <button aria-label="3D tools" className="flex w-[68px] items-center justify-center border-x-2 border-b-2 border-[#222933] bg-[#2f343f]">
          <svg viewBox="0 0 28 28" className="size-7" fill="none" stroke="#a9adb5" strokeWidth="1.5">
            <path d="M1 8h18v19H1zM1 8l7-7h19l-8 7M27 1v18l-8 8M8 1v19h18M8 20l-7 7" />
          </svg>
        </button>
        <button aria-label="More tool sets" className="flex flex-1 items-center justify-center border-r-2 border-b-2 border-[#222933]">
          <Chevrons />
        </button>
      </div>
      <div className="min-h-0 flex-1 overflow-hidden">
        {toolSets.map(({ title, tools }, i) => (
          <section key={title}>
            {i > 0 && <hr className="mx-2 border-t-2 border-[#222933]" />}
            <h2 className={`flex items-center pt-1 pr-3 pl-2 text-xl text-white ${i > 0 ? "h-10" : "h-[38px]"}`}>
              <Caret size="h-2 w-4" className="mr-2.5" />
              <span className="flex-1">{title}</span>
              <Gear className="size-[18px]" />
            </h2>
            <div className="grid grid-cols-3 pb-2.5">
              {tools.map((tool) => (
                <button key={tool} aria-label={tool.replace("+", "")} className="relative flex h-16 items-center justify-center">
                  <Icon name={tool.replace("+", "")} />
                  {tool.endsWith("+") && (
                    <svg viewBox="0 0 8 8" className="absolute right-2 bottom-2.5 size-2" aria-hidden="true">
                      <path d="M8 0v8H0z" fill="#a0a0a0" />
                    </svg>
                  )}
                </button>
              ))}
            </div>
          </section>
        ))}
      </div>
      <div className="flex h-12 shrink-0 items-center gap-9 pt-1 pl-[31px]">
        <button aria-label="Add palette">
          <Plus />
        </button>
        <button aria-label="Palette menu">
          <svg viewBox="0 0 26 22" className="h-[22px] w-[26px]" fill="none" stroke={G} strokeWidth="2">
            <path d="M5 1h21M5 7h21M5 19h21" />
            <path d="M0 13h18" strokeWidth="3" />
            <path d="M20 14l3-3 3 3z" fill={G} stroke="none" />
          </svg>
        </button>
      </div>
    </aside>
  );
}

const MAG = "#e93cf0";
const CYAN = "#6efcff";

function Dim({ x, y, angle = 0, children }: { x: number; y: number; angle?: number; children: string }) {
  return (
    <text transform={`translate(${x} ${y}) rotate(${angle})`} y="-7" textAnchor="middle" fontSize="21" fill={CYAN}>
      {children}
    </text>
  );
}

function Drawing() {
  return (
    <svg viewBox="180 128 2228 1624" className="absolute inset-0 size-full" fill="none" strokeWidth="1.4" fontFamily="Liberation Sans, Arial, sans-serif">
      <rect x="466" y="222" width="1721" height="1214" fill="#838383" />
      <rect x="468" y="224" width="1717" height="1210" fill="#7a7a7a" />
      <rect x="471" y="226" width="1711" height="1206" fill="#fff" stroke="#d4d4d4" />

      {/* axes */}
      <path d="M502.500 196v74" stroke="#3f8f35" />
      <path d="M502.500 678v90M450 678.500h52" stroke="#777777" />
      <path d="M909 678.500h61" stroke="#8a3b3b" />
      <path d="M994 754.500h640" stroke="#a84f4f" />
      <path d="M1788.500 752v670" stroke="#4f8f4a" />

      {/* square */}
      <path d="M502.500 270.500h406v408h-406z" stroke="#e8352b" />
      <path d="M886.500 270v408M870 270.500h23M870 678.500h23M502.500 646v20M908.500 646v20M501 662.500h409" stroke={MAG} />
      <text x="500" y="270" fontSize="14" fill="#e8352b">QUADRADO</text>
      <Dim x={704} y={665}>1.00</Dim>
      <Dim x={886} y={475} angle={-90}>1.00</Dim>

      {/* golden rectangle */}
      <path d="M952.500 270.500h660v408h-660zM952.500 678.500l660-408M1603 256l10 14M943 664l9 14" stroke={MAG} />
      <text x="949" y="270" fontSize="14" fill={MAG}>RETANGULO AUREO</text>
      <Dim x={1280} y={476} angle={-31.7}>1.90</Dim>

      {/* triangle */}
      <path d="M1664.500 646.500l204-352.500 204 352.500z" stroke="#6ff84e" />
      <path d="M1839 277l-189 324.500M1824 268l29 17M2024.500 646.500a48 48 0 0 1 24-41.500" stroke={MAG} />
      <text x="1662" y="668" fontSize="14" fill="#6ff84e">TRIANGULO</text>
      <Dim x={1736} y={455} angle={-60}>1.00</Dim>
      <Dim x={2032} y={626} angle={-60}>60°</Dim>

      {/* circle */}
      <circle cx="1302.5" cy="906" r="204" stroke="#ffff5a" />
      <path d="M1302.500 906v203M1286 906.500h16M1286 1109.500h16" stroke={MAG} />
      <text x="1222" y="1090" fontSize="14" fill="#ffff5a">CIRCULO</text>
      <Dim x={1301} y={1007} angle={-90}>0.50</Dim>

      {/* root-two rectangle */}
      <path d="M502.500 982.500h574v406h-574z" stroke="#2026ee" />
      <path d="M502.500 1388.500l574-406M1067 968l10 14M493 1375l9 13" stroke={MAG} />
      <text x="499" y="976" fontSize="14" fill="#2026ee">RETANGULO R2</text>
      <Dim x={786} y={1188} angle={-35.3}>1.73</Dim>

      {/* pentagon */}
      <path d="M1834.500 760.500l330 240-126 388h-406l-126-388z" stroke={CYAN} />
      <path d="M1553 985.500l125 388M1536 991l34-11M1662 1379l33-11M1935.500 1388a104 104 0 0 1 136-99" stroke={MAG} />
      <text x="1637" y="1410" fontSize="14" fill={CYAN}>PENTAGONO</text>
      <Dim x={1613} y={1180} angle={72}>1.00</Dim>
      <Dim x={1978} y={1305} angle={-38}>108°</Dim>

      <g fill={MAG}>
        {[[502, 662], [909, 662], [886, 270], [886, 678], [1612, 270], [952, 678], [1839, 277], [2024, 646], [2048, 605], [1302, 906], [1302, 1109], [1076, 982], [502, 1388], [1553, 985], [1678, 1373], [1935, 1388], [2071, 1289]].map(([x, y]) => (
          <rect key={`${x}-${y}`} x={x - 1} y={y - 1} width="4" height="4" />
        ))}
      </g>

      {/* UCS icon */}
      <path d="M212.500 1545v173.500h100zM212.500 1702.500h16v16M216 1596l12 13 13-13M228.500 1608v13M268 1690l25 25M293 1690l-25 25" stroke="#2b49e0" />

      {/* cursor */}
      <path d="M2208 840.500h66M2287 840.500h66M2280.500 768v66M2280.500 847v66M2274.500 834.500h12v12h-12z" stroke="#111" />
    </svg>
  );
}

function CommandLine() {
  return (
    <div className="absolute bottom-0 left-1/2 flex w-[1000px] -translate-x-1/2 flex-col items-end font-['Noto_Sans',sans-serif] text-[#b9bcc2]">
      <div className="relative w-[920px] bg-[#3b4453] pt-3.5 pl-2.5 text-[20px] leading-[30px]">
        <p>Command: M MOVE 1 found</p>
        <p>Specify base point or [Displacement] &lt;Displacement&gt;:</p>
        <p>Specify second point or &lt;use first point as displacement&gt;:</p>
        <p>Command: *Cancel*</p>
        <p>Command:</p>
        <p>Command:</p>
        <div className="absolute right-2.5 bottom-1 h-10 w-2 rounded bg-[#a3a6ab]" />
      </div>
      <div className="flex h-[50px] w-full items-center bg-[#3b4453]">
        <button aria-label="Recent commands" className="flex w-20 items-center gap-1 pl-4">
          <svg viewBox="0 0 30 20" className="h-5 w-[30px]" fill="none" stroke="#c4c4c4" strokeWidth="2.5" aria-hidden="true">
            <path d="M2 1l9 6-9 6M15 18h13" />
          </svg>
          <Caret />
        </button>
        <input aria-label="Command" placeholder="Type a command" className="h-full flex-1 bg-transparent pl-2.5 text-[21px] italic outline-none placeholder:text-[#9da1a9]" />
        <Caret className="mr-[22px] text-[#a0a0a0]" />
        <button aria-label="Detach" className="mr-5">
          <svg viewBox="0 0 28 28" className="size-7" fill="none" stroke={G} strokeWidth="2">
            <path d="M10 9H2v18h24V9h-8M8 9v18" />
            <path d="M15 18V5" stroke={B} />
            <path d="M15 0l5 7H10z" fill={B} stroke="none" />
          </svg>
        </button>
      </div>
    </div>
  );
}

function Viewport() {
  return (
    <main className="flex min-w-0 flex-1 flex-col">
      <div className="flex h-[46px] shrink-0 border-b-2 border-[#222933]">
        <button aria-label="Start" className="flex w-[50px] items-center justify-center border-r-2 border-[#222933]">
          <svg viewBox="0 0 28 28" className="size-7" aria-hidden="true">
            <path d="M0 0h14v14H0z" fill={B} />
            <path d="M16 2h12v12H16zM2 16h12v12H2zM16 16h12v12H16z" fill={G} />
          </svg>
        </button>
        <button aria-label="New drawing" className="flex w-[46px] items-center justify-center border-r-2 border-[#222933]">
          <Plus />
        </button>
        <button className="w-[258px] border-r-2 border-[#222933] bg-[#4f5b70] pb-1 pl-1.5 text-left text-xl font-bold text-white">rd*</button>
      </div>
      <div className="relative min-h-0 flex-1 overflow-hidden bg-[#8a8a8a]">
        <Drawing />
        <CommandLine />
      </div>
    </main>
  );
}

function DetachIcon() {
  return (
    <svg viewBox="0 0 24 28" className="h-7 w-6 shrink-0" fill="none" stroke="#e8e8e8" strokeWidth="2" aria-hidden="true">
      <path d="M9 6V1h13v26H9v-5M3 14h10" />
      <path d="M1 14l6-5v10z" fill="#e8e8e8" stroke="none" />
    </svg>
  );
}

function PropSelect({ id, value }: { id: string; value: string }) {
  return (
    <div className="relative h-[38px] w-[214px]">
      <select id={id} className="size-full appearance-none rounded border-2 border-[#2f3f42] bg-[#4f5b70] pl-3 font-medium text-white">
        <option>{value}</option>
      </select>
      <Caret className="absolute top-3.5 right-2.5 text-[#d9d9d9]" />
    </div>
  );
}

const th = "sticky top-0 z-10 h-[47px] border-r-4 border-[#262c38] p-0";

function LayerTable() {
  const ref = useScrolled<HTMLDivElement>(24);
  return (
    <div className="flex min-h-0 flex-1">
      <div ref={ref} className="w-[402px] overflow-hidden bg-[#4f5a6c]">
        <table className="w-[402px] table-fixed border-separate border-spacing-0 text-left">
          <colgroup>
            <col className="w-[52px]" />
            <col className="w-[116px]" />
            <col className="w-11" />
            <col className="w-11" />
            <col className="w-[94px]" />
            <col className="w-[52px]" />
          </colgroup>
          <thead>
            <tr>
              <th aria-label="On" className={`${th} bg-[#2f343f]`}>
                <svg viewBox="0 0 24 16" className="mx-auto h-4 w-6"><path d="M0 8q12-16 24 0-12 16-24 0z" fill={G} /><circle cx="12" cy="8" r="5" fill="#2f343f" /><circle cx="12" cy="8" r="2.500" fill={G} /></svg>
              </th>
              <th className={`${th} bg-[#4a566b]`}>
                <span className="flex items-center pl-2 font-bold text-[#d9d9d9]">
                  <svg viewBox="0 0 16 16" className="mr-4 size-4"><path d="M1 1h14v14H1z" fill="none" stroke={G} strokeWidth="2" /><path d="M15 1v14H1z" fill={G} /></svg>
                  <span className="flex-1">N...</span>
                  <svg viewBox="0 0 10 16" className="mr-3 h-4 w-2.5"><path d="M5 0l5 6H0zM5 16l5-6H0z" fill={G} /></svg>
                </span>
                <svg viewBox="0 0 12 8" className="absolute bottom-0 left-[50px] h-2 w-3"><path d="M0 8l6-8 6 8z" fill="#4b93e8" /></svg>
              </th>
              <th aria-label="Freeze" className={`${th} bg-[#2f343f]`}>
                <svg viewBox="0 0 20 20" className="mx-auto size-5"><Flake x={10} y={10} c={G} /></svg>
              </th>
              <th aria-label="Lock" className={`${th} bg-[#2f343f]`}>
                <svg viewBox="-1 0 16 20" className="mx-auto h-5 w-4" fill="none"><Lock x={0} y={0} c={G} /></svg>
              </th>
              <th aria-label="Lineweight" className={`${th} bg-[#2f343f]`}>
                <svg viewBox="0 0 18 14" className="mx-auto h-3.5 w-[18px]" stroke={G}><path d="M0 1h18" strokeWidth="1" /><path d="M0 6h18" strokeWidth="2" /><path d="M0 12h18" strokeWidth="4" /></svg>
              </th>
              <th aria-label="Linetype" className="sticky top-0 z-10 h-[47px] bg-[#2f343f] p-0">
                <svg viewBox="0 0 18 14" className="ml-auto h-3.5 w-[18px]" stroke={G} strokeWidth="2"><path d="M0 1h18" strokeDasharray="2 2" /><path d="M0 7h18" strokeDasharray="7 3" /><path d="M0 13h18" /></svg>
              </th>
            </tr>
          </thead>
          <tbody className="font-medium text-white">
            {layers.map(({ name, color, off, short }, i) => (
              <tr key={i} className={name === "TEXTO" ? "bg-[#909dae]" : ""}>
                <td className="h-[38px] p-0 pl-4">
                  <span className={`block size-4 rounded-full ${off ? "border border-[#6e7889]" : "bg-[#d9d9d9]"}`} />
                </td>
                <td className="p-0 pl-1 whitespace-nowrap">
                  <span className="flex items-center gap-[18px]">
                    <span className="size-[18px] shrink-0 border-2 border-black" style={{ backgroundColor: color }} />
                    {name}
                  </span>
                </td>
                <td className="p-0" />
                <td className="p-0" />
                <td className="p-0 pl-3">De...</td>
                <td className="p-0 pl-3">
                  <span className={`block h-0.5 bg-white ${short ? "w-[30px]" : "w-full"}`} />
                </td>
              </tr>
            ))}
          </tbody>
        </table>
      </div>
      <div className="flex flex-1 flex-col justify-end pb-8 pl-3">
        <div className="h-[432px] w-2.5 rounded-full bg-[#8a8f9b]" />
      </div>
    </div>
  );
}

function LayersPanel() {
  return (
    <section className="flex min-h-0 flex-1 flex-col pl-5 text-[21px]">
      <div className="flex h-[30px] items-center justify-between pt-0.5 pr-5">
        <h2 className="text-[23px] font-medium text-[#ececec]">Layers</h2>
        <button aria-label="Undock">
          <DetachIcon />
        </button>
      </div>
      <div className="flex h-[88px] items-center pt-3">
        {["layMake", "layMatch", "layPrev", "layIso", "layUniso", "layFreeze", "layOff", "layLock", "layUnlock"].map((name) => (
          <button key={name} aria-label={name} className="flex w-12 justify-center">
            <Icon name={name} />
          </button>
        ))}
      </div>
      <div className="relative mt-0.5 mr-4 flex h-[50px] shrink-0 items-center rounded-md border-2 border-[#2f3f42] bg-[#4f5b70] pl-5">
        <span className="size-4 rounded-full bg-[#d9d9d9]" />
        <svg viewBox="-1 0 16 20" className="ml-[18px] h-5 w-4 opacity-60" fill="none"><Lock x={0} y={0} c="#7c8494" /></svg>
        <svg viewBox="0 0 20 20" className="ml-4 size-5"><Flake x={10} y={10} c="#69728a" /></svg>
        <span className="ml-3.5 size-[18px] border-2 border-black bg-[#6ff9ff]" />
        <svg viewBox="0 0 26 22" className="ml-3 h-[22px] w-[26px]" fill="none" stroke="#69728a" strokeWidth="2"><path d="M9 16H1V2h18v5" /><Flake x={18} y={14} c="#69728a" r={7} /></svg>
        <select aria-label="Current layer" className="absolute inset-0 appearance-none bg-transparent pl-[196px] font-medium text-white">
          <option>TEXTO</option>
        </select>
        <Caret className="absolute right-2.5 text-[#d9d9d9]" />
      </div>
      <div className="relative mt-1.5 mr-[18px] ml-0.5 h-[50px] shrink-0">
        <select aria-label="Layer state" className="size-full appearance-none rounded-md border-2 border-[#2f3f42] bg-[#4f5b70] pl-3 font-medium text-white">
          <option>Unsaved Layer State</option>
        </select>
        <Caret className="absolute top-[21px] right-2.5 text-[#d9d9d9]" />
      </div>
      <button className="flex h-14 shrink-0 items-center gap-6 pb-1 pl-2 text-[22px] text-[#c9ccd2]">
        <svg viewBox="0 0 16 10" className="h-2.5 w-4" fill="none" stroke="currentColor" strokeWidth="2.5" aria-hidden="true">
          <path d="M1 1l7 7 7-7" />
        </svg>
        Hide Layer List
      </button>
      <LayerTable />
      <div className="flex h-[30px] shrink-0 items-center justify-between pr-5">
        <div className="ml-[5px] h-2 w-[152px] rounded-full bg-[#8a8f9b]" />
        <div className="size-[30px] bg-[#f8f8f8]" />
      </div>
      <div className="flex h-12 shrink-0 items-center gap-7 pl-3.5">
        {["addLayer", "layState", "group1", "group2"].map((name) => (
          <button key={name} aria-label={name}>
            <Icon name={name} />
          </button>
        ))}
        <button aria-label="Delete layer" className="ml-auto h-1 w-4 bg-[#7f8591]" />
        <button aria-label="Columns" className="mr-[30px] ml-1.5 flex items-center gap-1.5 text-[#d9d9d9]">
          <svg viewBox="0 0 20 16" className="h-4 w-5" fill="none" stroke={G} strokeWidth="2"><path d="M1 1h18v14H1zM7 1v14M13 1v14" /></svg>
          <Caret size="h-1.5 w-2.5" />
        </button>
      </div>
      <label className="mt-0.5 mr-[22px] mb-[18px] ml-0.5 flex h-10 shrink-0 items-center rounded-[10px] bg-white">
        <svg viewBox="0 0 36 26" className="ml-2 h-[26px] w-9" fill="none" stroke="#222" strokeWidth="2" aria-hidden="true">
          <circle cx="11" cy="11" r="9.500" />
          <path d="M18 18l7 6M24 9l5 5 5-5" />
        </svg>
        <input aria-label="Search for layer" placeholder="Search for layer" className="min-w-0 flex-1 bg-transparent pl-2.5 text-[25px] outline-none placeholder:text-[#c0c0c0]" />
      </label>
    </section>
  );
}

const label = "w-[127px] text-right whitespace-nowrap text-[#c9ccd2]";

function PropertiesPanel() {
  const ref = useScrolled<HTMLDivElement>(30);
  return (
    <section className="flex h-[360px] shrink-0 flex-col border-t-2 border-[#222933] pl-5 text-[20px]">
      <div className="flex h-8 shrink-0 items-start pr-[18px]">
        <h2 className="flex-1 text-[23px] leading-[30px] font-medium text-[#ececec]">Properties</h2>
        <div className="flex h-6 w-[120px] border-2 border-t-0 border-[#2f343f] text-[17px] leading-[22px]">
          <button className="flex-1 border-r-2 border-[#2f343f] text-[#7e8592]">All</button>
          <button className="flex-1 bg-[#4f5b70] text-[#e6e6e6]">My</button>
        </div>
        <button aria-label="Customize" className="mr-[22px] ml-5">
          <svg viewBox="0 0 28 26" className="h-[26px] w-7" fill="none" stroke={G} strokeWidth="2"><path d="M1 0v22h8M5 3h13M5 8h10M5 13h8" /><path d="M12 24l2-6 8-9 5 5-8 9z" fill={G} stroke="none" /></svg>
        </button>
        <button aria-label="Undock">
          <svg viewBox="0 0 24 24" className="size-6" fill="none" stroke="#e8e8e8" strokeWidth="2" aria-hidden="true">
            <path d="M9 4V1h13v21H9v-4M3 11h10" />
            <path d="M1 11l6-5v10z" fill="#e8e8e8" stroke="none" />
          </svg>
        </button>
      </div>
      <div className="relative mt-4 mr-[22px] ml-0.5 h-11 shrink-0">
        <select aria-label="Selection" disabled className="size-full appearance-none rounded border-2 border-[#3f4854] bg-[#434c5d] pl-3 text-[21px] font-medium text-[#7a8291]">
          <option>Paper Space</option>
        </select>
        <Caret className="absolute top-[18px] right-2.5 text-[#6f7785]" />
      </div>
      <div className="mt-[9px] mb-3.5 flex min-h-0 flex-1">
        <div ref={ref} className="flex-1 overflow-hidden">
          <div className="flex h-[46px] items-center gap-5 pl-[47px]">
            <label htmlFor="ltscale" className={label}>Ltype scale</label>
            <input id="ltscale" defaultValue="0.0000" className="h-[38px] w-[214px] rounded border-2 border-[#2f3f42] bg-[#4f5b70] pl-2 text-white" />
          </div>
          <div className="flex h-[46px] items-center gap-5 pl-[47px]">
            <label htmlFor="lw" className={label}>Lineweight</label>
            <PropSelect id="lw" value="ByLayer" />
          </div>
          <div className="flex h-[46px] items-center gap-5 pl-[47px]">
            <label htmlFor="transparency" className={label}>Transparency</label>
            <div className="flex w-[214px] items-center justify-between pl-1.5">
              <div className="relative">
                <input id="transparency" defaultValue="0" className="h-[34px] w-[124px] border-2 border-[#2f3f42] bg-[#4a566b] pr-1.5 text-right font-medium text-white" />
                <span className="absolute bottom-1 left-[58px] h-3 w-px bg-[#9aa0ab]" />
                <span className="absolute top-1 left-0.5 h-1.5 w-0.5 bg-[#5b95ee]" />
                <span className="absolute bottom-1 left-0.5 h-1.5 w-0.5 bg-[#5b95ee]" />
              </div>
              <button aria-label="Transparency source" className="flex h-9 w-[78px] items-center justify-between rounded border-2 border-[#2f3f42] bg-[#4f5b70] pr-2 pl-3 text-[#d9d9d9]">
                <svg viewBox="0 0 32 32" className="size-[30px]" fill="none" strokeWidth="2">{icons.transp}</svg>
                <Caret />
              </button>
            </div>
          </div>
          {[["Text style", "Standard"], ["Dimension...", "1_20"], ["Multileader...", "Standard"]].map(([name, value]) => (
            <div key={name} className="flex h-[46px] items-center gap-5 pl-[47px]">
              <label htmlFor={name} className={label}>{name}</label>
              <PropSelect id={name} value={value} />
            </div>
          ))}
        </div>
        <div className="w-[44px] shrink-0 pt-[49px] pl-3.5">
          <div className="h-16 w-2.5 rounded-full bg-[#8a8f9b]" />
        </div>
      </div>
    </section>
  );
}

function RightDock() {
  const tab = "flex items-center justify-center border-b-2 border-l-2 border-[#222933] bg-[#2f343f]";
  return (
    <aside className="flex w-[472px] shrink-0 flex-col font-['Inter',sans-serif]">
      <div className="flex h-[46px] shrink-0">
        <button aria-label="Layers" className="flex w-[103px] items-center justify-center">
          <svg viewBox="0 0 32 32" className="size-8" fill="none" strokeWidth="2"><Plane y={2} /><path d="M4 20l5-5h8l6-5h2l-8 10zM4 27l4-4h7v4z" fill={G} /><circle cx="25" cy="24" r="7.500" fill={G} /><path d="M25 17v3M25 22v7" stroke={PANEL} strokeWidth="2.500" /></svg>
        </button>
        <button aria-label="References" className={`${tab} w-[106px]`}>
          <Icon name="reference" />
        </button>
        <button aria-label="Sheets" className={`${tab} w-[105px]`}>
          <svg viewBox="0 0 28 28" className="size-7" aria-hidden="true"><path d="M0 0h28v28H0z" fill={G} /><path d="M0 0h28v6H0z" fill="#a5a5a5" /><path d="M4 9h5v5H4zM4 16h5v5H4z" fill="#2f343f" /><path d="M12 9h5v5h-5zM20 9h4v5h-4zM12 16h5v5h-5zM20 16h4v5h-4zM4 24h20v2H4z" fill="#777" /></svg>
        </button>
        <div className={`${tab} flex-1`} />
        <button aria-label="More palettes" className="flex w-[50px] items-center justify-center border-b-2 border-l-2 border-[#222933]">
          <Chevrons />
        </button>
      </div>
      <LayersPanel />
      <PropertiesPanel />
    </aside>
  );
}

const toggles = ["modelPaper", "snapCross", "infer", "ortho", "polar", "dynInput", "lineweight", "transp", "cycleSel", "osnap", "snap2d", "snap3d"];
const activeToggles = ["transp", "cycleSel", "osnap", "snap2d", "snap3d"];

function StatusBar() {
  const tab = "flex items-center justify-center border-r-2 border-[#222933]";
  return (
    <footer className="flex h-12 shrink-0 border-y-2 border-l-2 border-[#222933] font-['Noto_Sans',sans-serif] text-[21px] text-[#b9bcc2]">
      <button className={`${tab} w-[120px] pr-1`}>Model</button>
      <button aria-label="New layout" className={`${tab} w-11`}>
        <Plus />
      </button>
      <button className={`${tab} w-[116px] bg-[#4f5b70] font-semibold text-white`}>Layout1</button>
      <button className={`${tab} w-[124px]`}>Layo...1 (4)</button>
      <button className={`${tab} w-[126px] border-r-0`}>Layo...1 (5)</button>
      <div className="flex flex-1 items-center justify-end">
        <span className="flex h-full items-center border-l-2 border-[#222933] pr-[7px] pl-5 text-[23px] text-[#6b727f]">0.4225, 0.1456, 0.0000</span>
        {toggles.map((name) => (
          <button key={name} aria-label={name} className="flex w-11 justify-center">
            <span className={`flex size-10 items-center justify-center ${activeToggles.includes(name) ? "bg-[#6b8dbc]" : ""}`}>
              <Icon name={name} />
            </span>
          </button>
        ))}
        <button aria-label="Annotation" className="flex w-[76px] items-center gap-3 pl-1.5">
          <Icon name="annoTag" />
          <Caret />
        </button>
        <button aria-label="Previous" className="flex w-[38px] justify-center"><Icon name="prev" /></button>
        <button aria-label="Viewport" className="flex w-10 justify-center"><Icon name="viewport" /></button>
        <button aria-label="Next" className="flex w-10 justify-center"><Icon name="next" /></button>
        {["annoVis", "annoAuto", "isolate"].map((name) => (
          <button key={name} aria-label={name} className="flex w-11 justify-center">
            <Icon name={name} />
          </button>
        ))}
        <button aria-label="Settings" className="mr-2 flex w-11 justify-center text-[#d9d9d9]">
          <Gear className="size-[30px]" />
        </button>
      </div>
    </footer>
  );
}

export default function App() {
  return (
    <div className="flex h-screen flex-col overflow-hidden bg-[#3b4453] font-['Liberation_Sans',Arial,sans-serif]">
      <TopBar />
      <div className="flex min-h-0 flex-1">
        <ToolPalette />
        <div className="flex min-w-0 flex-1 flex-col">
          <div className="flex min-h-0 flex-1">
            <Viewport />
            <RightDock />
          </div>
          <StatusBar />
        </div>
      </div>
    </div>
  );
}
